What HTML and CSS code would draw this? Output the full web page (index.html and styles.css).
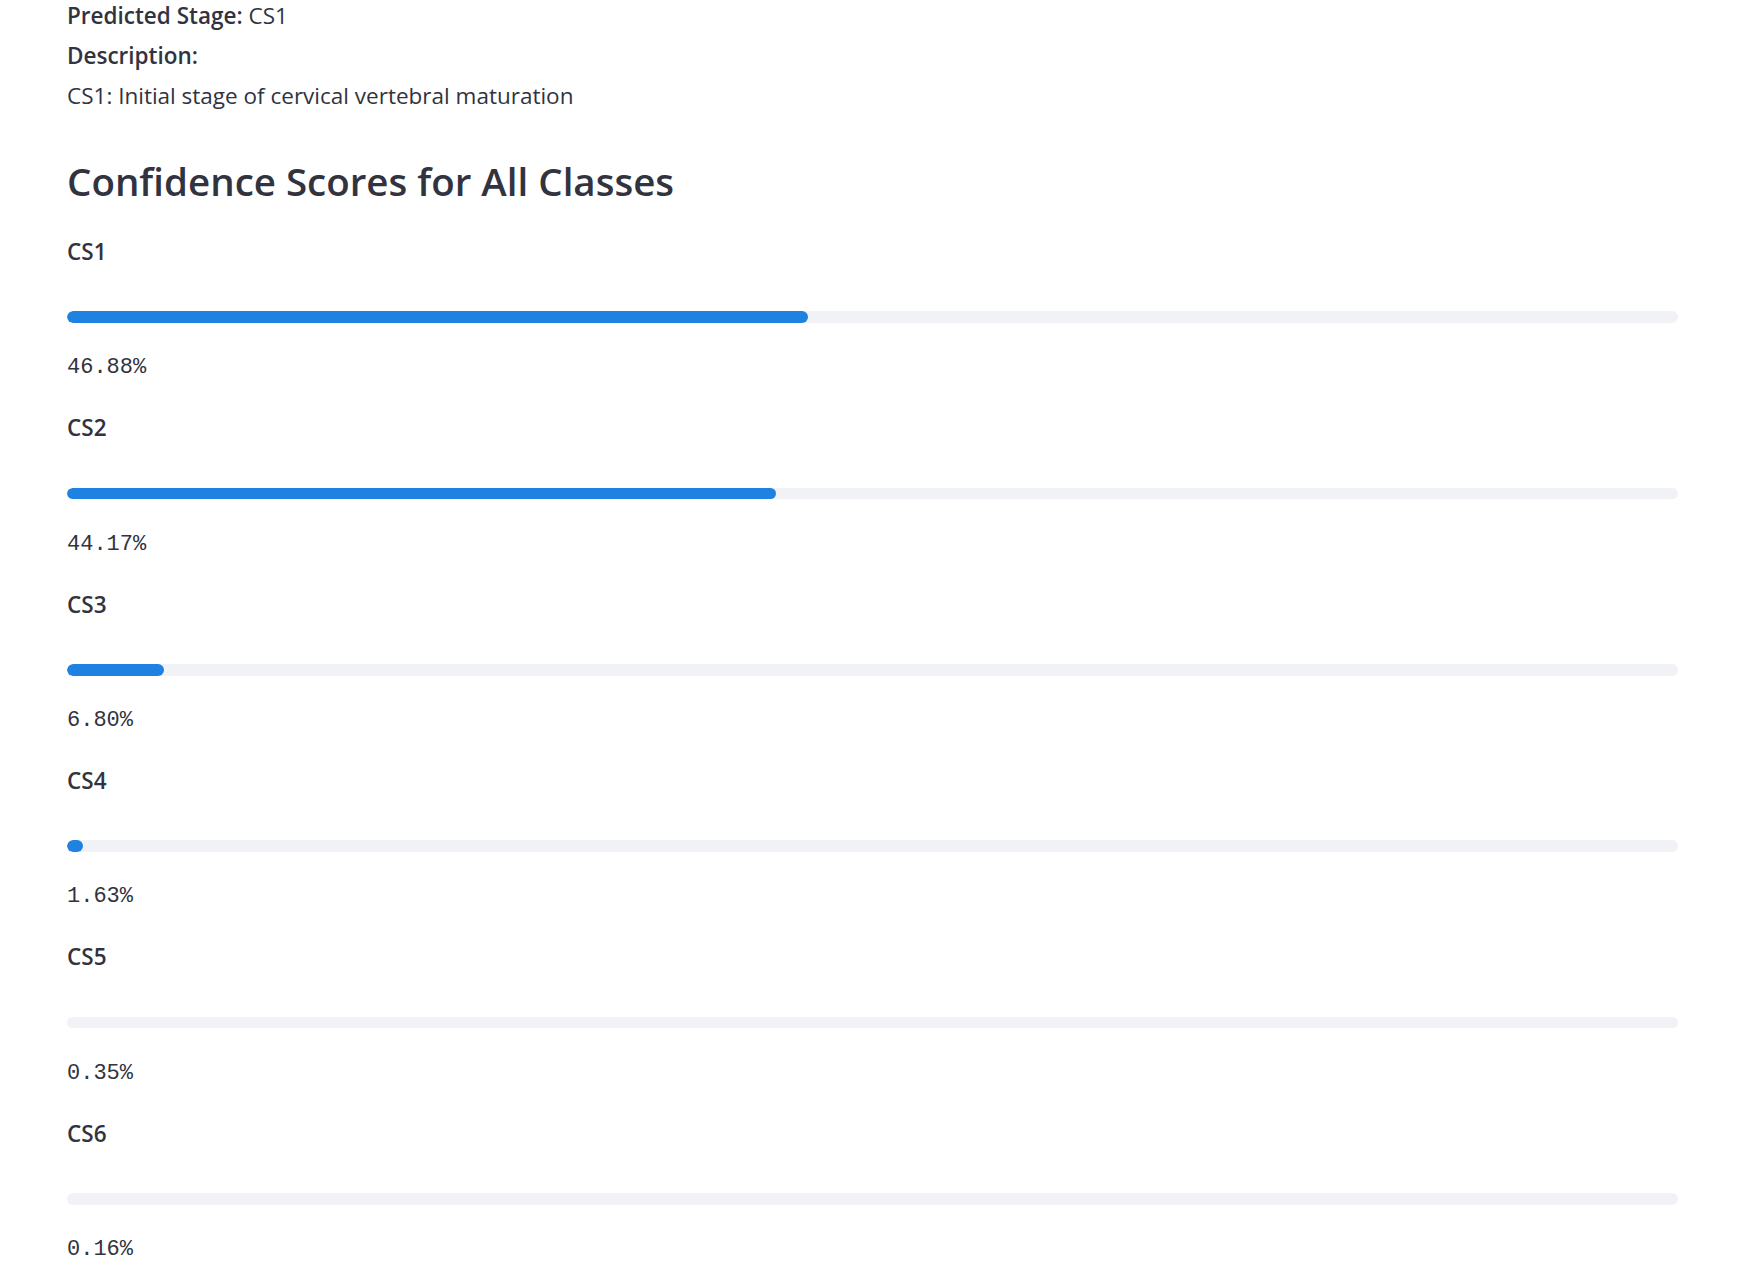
FILE: index.html
```html
<!DOCTYPE html>
<html>
<head>
<meta charset="utf-8">
<link rel="stylesheet" href="styles.css">
</head>
<body>
<main class="main">
  <div class="info">
    <p class="line"><strong>Predicted Stage:</strong> CS1</p>
    <p class="line"><strong>Description:</strong></p>
    <p class="line">CS1: Initial stage of cervical vertebral maturation</p>
  </div>
  <h2 class="heading">Confidence Scores for All Classes</h2>
  <div class="scores">
    <div class="score">
      <div class="label">CS1</div>
      <div class="track"><div class="fill" style="width:46%"></div></div>
      <div class="pct">46.88%</div>
    </div>
    <div class="score">
      <div class="label">CS2</div>
      <div class="track"><div class="fill" style="width:44%"></div></div>
      <div class="pct">44.17%</div>
    </div>
    <div class="score">
      <div class="label">CS3</div>
      <div class="track"><div class="fill" style="width:6%"></div></div>
      <div class="pct">6.80%</div>
    </div>
    <div class="score">
      <div class="label">CS4</div>
      <div class="track"><div class="fill" style="width:1%"></div></div>
      <div class="pct">1.63%</div>
    </div>
    <div class="score">
      <div class="label">CS5</div>
      <div class="track"><div class="fill" style="width:0%"></div></div>
      <div class="pct">0.35%</div>
    </div>
    <div class="score">
      <div class="label">CS6</div>
      <div class="track"><div class="fill" style="width:0%"></div></div>
      <div class="pct">0.16%</div>
    </div>
  </div>
</main>
</body>
</html>
```
FILE: styles.css
```css
html, body {
  margin: 0;
  padding: 0;
  background: #ffffff;
}
body {
  font-family: "Open Sans", "Noto Sans", sans-serif;
  color: #31333f;
  overflow: hidden;
}
.main {
  padding: 0 71px 0 67px;
  display: flex;
  flex-direction: column;
}
.info {
  display: flex;
  flex-direction: column;
  gap: 8px;
}
.line {
  margin: 0;
  font-size: 22.5px;
  line-height: 32px;
}
.line strong {
  font-weight: 600;
}
.heading {
  margin: 42.5px 0 0 0;
  font-size: 38.5px;
  line-height: 53px;
  font-weight: 600;
}
.scores {
  margin-top: 26.5px;
  display: flex;
  flex-direction: column;
  gap: 26.2px;
}
.score {
  display: flex;
  flex-direction: column;
}
.label {
  font-size: 22.5px;
  line-height: 36px;
  font-weight: 600;
}
.track {
  margin-top: 41.2px;
  height: 11.6px;
  border-radius: 6px;
  background: #f0f2f6;
  overflow: hidden;
}
.fill {
  height: 100%;
  border-radius: 6px;
  background: #1f82e0;
}
.pct {
  margin-top: 29.4px;
  font-family: "Liberation Mono", monospace;
  font-size: 22px;
  line-height: 32px;
  color: #31333f;
}
```
